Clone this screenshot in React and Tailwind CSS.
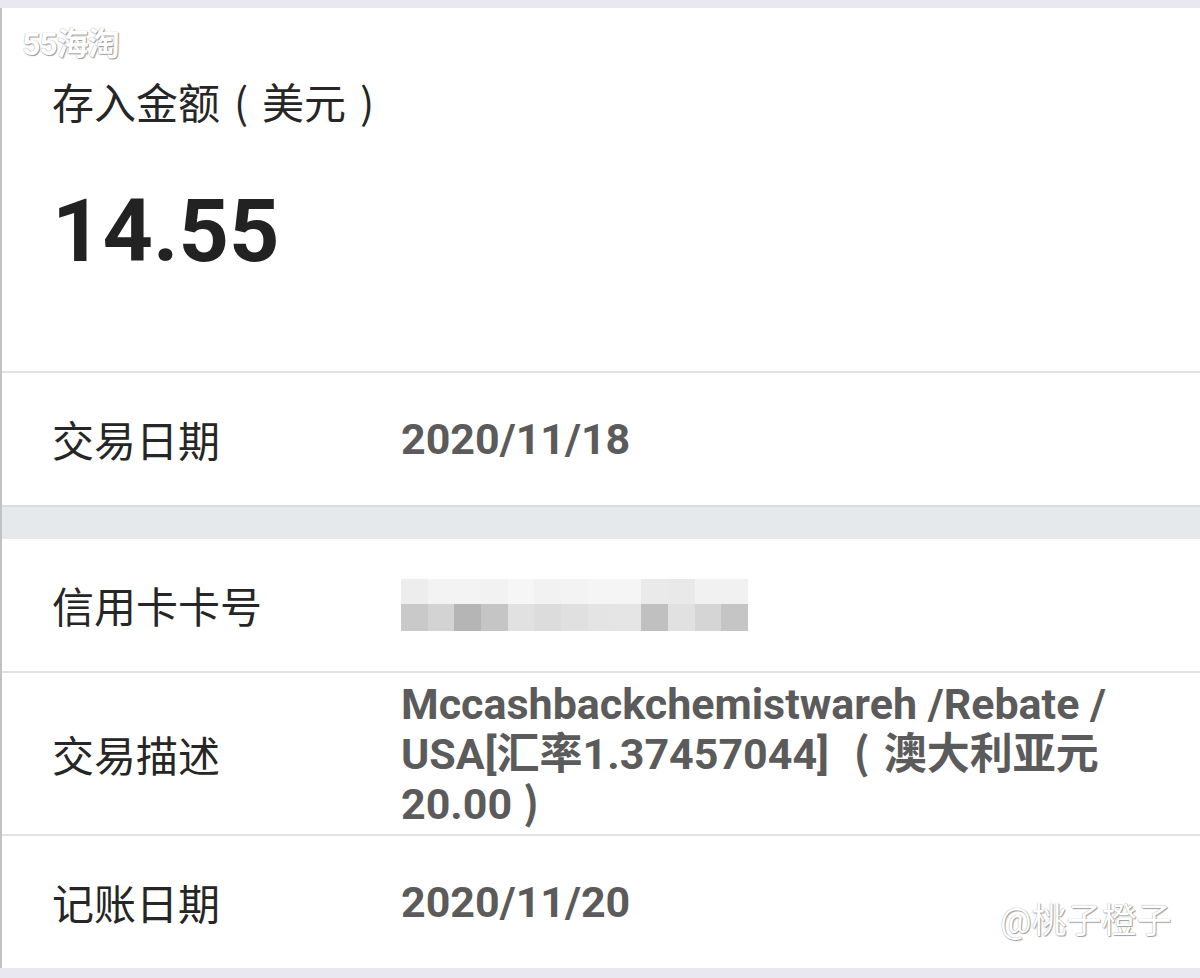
const cjk = "font-['Noto_Sans_CJK_SC',sans-serif]";
const mixed = "font-['Roboto','Noto_Sans_CJK_SC',sans-serif]";

// pixelated card number, two rows of blocks
const topRow = [
  'bg-[#ededed]', 'bg-[#f3f3f3]', 'bg-[#f3f3f3]', 'bg-[#f2f2f2]', 'bg-[#f6f6f6]', 'bg-[#f2f2f2]', 'bg-[#f3f3f3]',
  'bg-[#f5f5f5]', 'bg-[#f5f5f5]', 'bg-[#eaeaea]', 'bg-[#e9e9e9]', 'bg-[#f1f1f1]', 'bg-[#f1f1f1]',
];
const bottomRow = [
  'bg-[#c9c9c9]', 'bg-[#d3d3d3]', 'bg-[#b5b5b5]', 'bg-[#c5c5c5]', 'bg-[#e1e1e1]', 'bg-[#dcdcdc]', 'bg-[#e0e0e0]',
  'bg-[#e4e4e4]', 'bg-[#e5e5e5]', 'bg-[#c0c0c0]', 'bg-[#e1e1e1]', 'bg-[#d5d5d5]', 'bg-[#c5c5c5]',
];

// full-width bracket drawn centred in its cell, as in the screenshot
function P({ children, w = 'w-[42px]' }) {
  return <span className={`inline-block ${w} text-center leading-none ${cjk}`}>{children}</span>;
}

function Masked() {
  return (
    <div className="flex flex-col">
      <div className="flex h-[25px]">
        {topRow.map((c, i) => (
          <div key={i} className={`w-[26.7px] ${c}`} />
        ))}
      </div>
      <div className="flex h-[27px]">
        {bottomRow.map((c, i) => (
          <div key={i} className={`w-[26.7px] ${c}`} />
        ))}
      </div>
    </div>
  );
}

function Row({ label, children, tall = false }) {
  return (
    <div className={`flex items-center ${tall ? 'h-[161px]' : 'h-[132px]'}`}>
      <div className={`w-[399px] shrink-0 pl-[50px] text-[42px] leading-none text-[#262626] ${cjk}`}>
        {label}
      </div>
      <div className={`text-[43px] font-bold text-[#5b5b5b] ${mixed}`}>{children}</div>
    </div>
  );
}

const Divider = () => <div className="h-[2px] bg-[#e2e2e2]" />;

export default function App() {
  return (
    <div className="relative min-h-[978px] w-[1200px] overflow-hidden bg-[#e9e8f0]">
      <div className="h-[8px]" />
      <div className="border-l-2 border-[#c2c2c2] bg-white">
        {/* amount */}
        <div className="h-[363px] pl-[50px] pt-[64px]">
          <div className={`text-[42px] leading-[58px] text-[#262626] ${cjk}`}>
            存入金额<P>(</P>美元<P>)</P>
          </div>
          <div className="mt-[57px] font-['Roboto',sans-serif] text-[88px] font-bold leading-none text-[#222222]">
            14.55
          </div>
        </div>
        <Divider />
        <Row label="交易日期">2020/11/18</Row>

        <div className="h-[34px] border-t-2 border-[#dadde0] bg-[#e6e9ec]" />

        <Row label="信用卡卡号">
          <Masked />
        </Row>
        <Divider />
        <Row label="交易描述" tall>
          <div className="w-[722px] leading-[50px]">
            Mccashbackchemistwareh /Rebate / USA[汇率1.37457044] <P w="w-[44px]">(</P>澳大利亚元20.00<P w="w-[38px]">)</P>
          </div>
        </Row>
        <Divider />
        <Row label="记账日期">2020/11/20</Row>
      </div>

      {/* watermarks */}
      <div
        className={`absolute left-[22px] top-[20px] text-[32px] font-bold tracking-[-1px] text-white ${mixed} [text-shadow:0_0_1px_#8a8a8a,1px_1px_1px_#9a9a9a]`}
      >
        55海淘
      </div>
      <div
        className={`absolute left-[1000px] top-[896px] text-[35px] text-white ${mixed} [text-shadow:0_0_1px_#8a8a8a,1px_1px_1px_#a0a0a0]`}
      >
        @桃子橙子
      </div>
    </div>
  );
}
